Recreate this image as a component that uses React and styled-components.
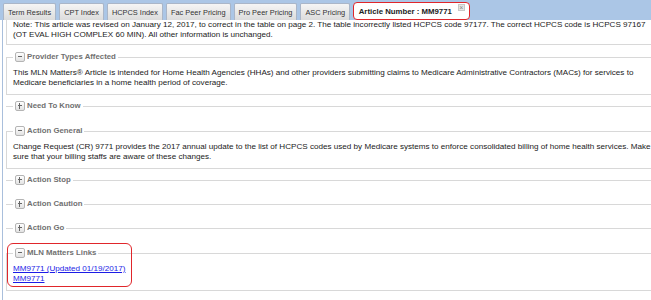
import React from 'react';
import styled, { createGlobalStyle, css } from 'styled-components';

const Global = createGlobalStyle`
  html, body { margin: 0; padding: 0; background: #fff; overflow: hidden; }
  body { font-family: "Liberation Sans", Arial, sans-serif; }
`;

const Page = styled.div`
  width: 664px;
  height: 300px;
  background: #fff;
`;

const TabBar = styled.div`
  display: flex;
  align-items: flex-end;
  gap: 3px;
  height: 20px;
  padding-left: 3px;
  box-sizing: border-box;
  background: #abc6e6;
`;

const Tab = styled.div`
  height: 17px;
  box-sizing: border-box;
  padding: 0 4px;
  display: flex;
  align-items: center;
  gap: 6px;
  font-size: 7.4px;
  color: #333;
  white-space: nowrap;
  border: 1px solid #aab6c8;
  border-bottom: none;
  border-radius: 2px 2px 0 0;
  background: linear-gradient(#f5f5f5, #dcdcdc);
  ${p => p.$active && css`
    height: 18px;
    padding: 0 4.5px;
    background: #fff;
    font-size: 7.8px;
    font-weight: bold;
    color: #222;
    border: 1.5px solid #e0262b;
    border-radius: 4px;
  `}
`;

const CloseIcon = styled.span`
  align-self: flex-start;
  margin-top: 1px;
  width: 7px;
  height: 7px;
  box-sizing: border-box;
  border: 1px solid #c8c8c8;
  background: #e6e6e6;
  color: #888;
  font-size: 7px;
  line-height: 5px;
  text-align: center;
  font-weight: normal;
`;

const Body = styled.div`
  margin-left: 2px;
  border-left: 1px solid #a9bfdc;
  padding-left: 3px;
  height: 280px;
`;

const NoteBox = styled.div`
  border: 1px solid #d8d8d8;
  border-top: none;
  padding: 0 6px 4px;
  margin-bottom: 6px;
`;

const Text = styled.div`
  font-size: 8.1px;
  line-height: 10px;
  color: #1a1a1a;
  white-space: nowrap;
`;

const Set = styled.fieldset`
  margin: 0 0 5px;
  padding: 5px 6px 6px;
  border: 1px solid #d8d8d8;
  min-width: 0;
  ${p => p.$collapsed && css`
    border: none;
    border-top: 1px solid #d8d8d8;
    padding: 0 6px ${p.$pad}px 7px;
  `}
`;

const Legend = styled.legend`
  padding: 0 2px;
  height: 12px;
  display: flex;
  align-items: center;
  gap: 2px;
  font-size: 7.8px;
  font-weight: bold;
  color: #707070;
  line-height: 12px;
`;

const Toggle = styled.span`
  position: relative;
  width: 10px;
  height: 10px;
  box-sizing: border-box;
  border: 1px solid #b4b4b4;
  border-radius: 2px;
  background: linear-gradient(#ffffff, #e2e2e2);
  &::before {
    content: '';
    position: absolute;
    left: 2px;
    right: 2px;
    top: 3px;
    height: 1px;
    background: #666;
  }
  ${p => p.$plus && css`
    &::after {
      content: '';
      position: absolute;
      top: 1px;
      bottom: 1px;
      left: 3px;
      width: 1px;
      background: #666;
    }
  `}
`;

const LinkList = styled.div`
  display: flex;
  flex-direction: column;
  font-size: 8.1px;
  line-height: 10px;
`;

const DocLink = styled.a`
  color: #1c1ce6;
  text-decoration: underline;
  align-self: flex-start;
`;

const Marked = styled.div`
  position: relative;
`;

const Highlight = styled.div`
  position: absolute;
  left: 1px;
  top: -4px;
  width: 125px;
  height: 44px;
  box-sizing: border-box;
  border: 1.5px solid #e0262b;
  border-radius: 6px;
  pointer-events: none;
`;

const tabs = ['Term Results', 'CPT Index', 'HCPCS Index', 'Fac Peer Pricing', 'Pro Peer Pricing', 'ASC Pricing'];

function Section({ title, collapsed, pad, children }) {
  return (
    <Set $collapsed={collapsed} $pad={pad}>
      <Legend>
        <Toggle $plus={collapsed} />
        {title}
      </Legend>
      {children}
    </Set>
  );
}

export default function App() {
  return (
    <Page>
      <Global />
      <TabBar>
        {tabs.map(t => <Tab key={t}>{t}</Tab>)}
        <Tab $active>
          Article Number : MM9771
          <CloseIcon>×</CloseIcon>
        </Tab>
      </TabBar>
      <Body>
        <NoteBox>
          <Text>
            Note: This article was revised on January 12, 2017, to correct in the table on page 2. The table incorrectly listed HCPCS code 97177. The correct HCPCS code is HCPCS 97167<br />
            (OT EVAL HIGH COMPLEX 60 MIN). All other information is unchanged.
          </Text>
        </NoteBox>
        <Section title="Provider Types Affected">
          <Text>
            This MLN Matters® Article is intended for Home Health Agencies (HHAs) and other providers submitting claims to Medicare Administrative Contractors (MACs) for services to<br />
            Medicare beneficiaries in a home health period of coverage.
          </Text>
        </Section>
        <Section title="Need To Know" collapsed pad={8} />
        <Section title="Action General">
          <Text>
            Change Request (CR) 9771 provides the 2017 annual update to the list of HCPCS codes used by Medicare systems to enforce consolidated billing of home health services. Make<br />
            sure that your billing staffs are aware of these changes.
          </Text>
        </Section>
        <Section title="Action Stop" collapsed pad={7} />
        <Section title="Action Caution" collapsed pad={7} />
        <Section title="Action Go" collapsed pad={8} />
        <Marked>
          <Section title="MLN Matters Links">
            <LinkList>
              <DocLink href="#">MM9771 (Updated 01/19/2017)</DocLink>
              <DocLink href="#">MM9771</DocLink>
            </LinkList>
          </Section>
          <Highlight />
        </Marked>
      </Body>
    </Page>
  );
}
